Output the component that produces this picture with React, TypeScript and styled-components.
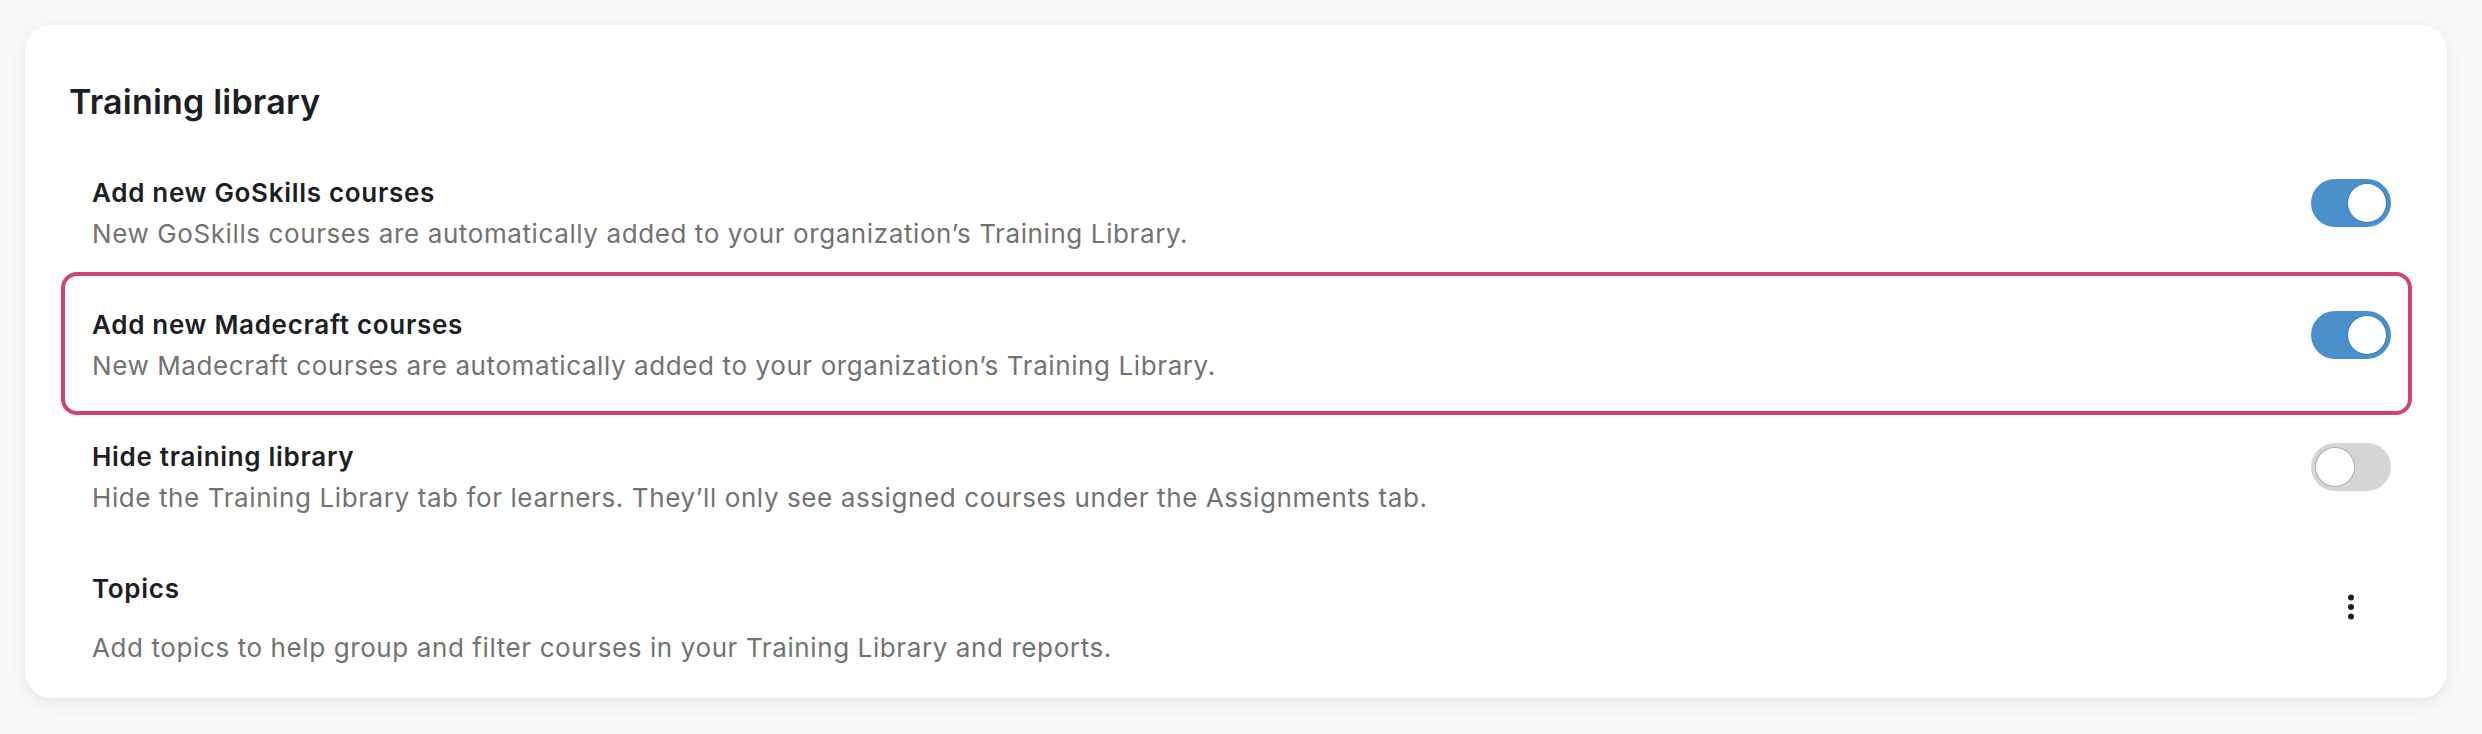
import styled, { createGlobalStyle } from 'styled-components';

const GlobalStyle = createGlobalStyle`
    html, body {
        margin: 0;
        padding: 0;
        background: #fafafa;
    }
    body {
        font-family: Inter, "Noto Sans", "Liberation Sans", sans-serif;
        -webkit-font-smoothing: antialiased;
    }
`;

const Page = styled.div`
    padding: 25px 35px 36px 25px;
`;

const Card = styled.section`
    background: #ffffff;
    border-radius: 26px;
    box-shadow: 0 5px 24px rgba(0, 0, 0, 0.08), 0 1px 4px rgba(0, 0, 0, 0.03);
    padding: 55px 56px 30px 44px;
`;

const CardTitle = styled.h2`
    margin: 0 0 48px;
    font-size: 34px;
    line-height: 44px;
    font-weight: 600;
    color: #1b1e22;
    letter-spacing: 0.2px;
`;

const SettingsList = styled.div`
    display: flex;
    flex-direction: column;
    gap: 50px;
    padding-left: 23px;
`;

const Row = styled.div<{ $highlighted?: boolean }>`
    position: relative;
    display: flex;
    align-items: flex-start;
    justify-content: space-between;
    gap: 40px;

    ${({ $highlighted }) =>
        $highlighted &&
        `
        &::after {
            content: '';
            position: absolute;
            inset: -32px -21px -29px -31px;
            border: 4px solid #cf4471;
            border-radius: 16px;
            pointer-events: none;
        }
    `}
`;

const RowText = styled.div<{ $spaced?: boolean }>`
    display: flex;
    flex-direction: column;
    gap: ${({ $spaced }) => ($spaced ? '18px' : '0')};
`;

const RowTitle = styled.div`
    font-size: 26px;
    line-height: 41px;
    font-weight: 600;
    letter-spacing: 0.7px;
    color: #1b1e22;
`;

const RowDescription = styled.div`
    font-size: 26px;
    line-height: 41px;
    font-weight: 400;
    letter-spacing: 0.6px;
    color: #717274;
`;

const Control = styled.div<{ $offset: number }>`
    flex: 0 0 80px;
    display: flex;
    justify-content: center;
    margin-top: ${({ $offset }) => $offset}px;
`;

const Switch = styled.button<{ $on: boolean }>`
    position: relative;
    width: 80px;
    height: 48px;
    padding: 0;
    border: none;
    border-radius: 24px;
    background: ${({ $on }) => ($on ? '#4a90ca' : '#d4d5d5')};
    cursor: pointer;

    &::before {
        content: '';
        position: absolute;
        top: 5px;
        left: ${({ $on }) => ($on ? '37px' : '5px')};
        width: 38px;
        height: 38px;
        border-radius: 50%;
        background: #ffffff;
        box-shadow: ${({ $on }) =>
            $on ? '0 0 0 1px rgba(40, 90, 140, 0.35)' : '0 0 0 1px rgba(0, 0, 0, 0.18)'};
    }
`;

const KebabButton = styled.button`
    display: flex;
    align-items: center;
    justify-content: center;
    width: 24px;
    height: 30px;
    padding: 0;
    border: none;
    background: transparent;
    cursor: pointer;
`;

function Kebab() {
    return (
        <KebabButton aria-label="More options">
            <svg width="8" height="28" viewBox="0 0 8 28" fill="#1f2023">
                <circle cx="4" cy="4.5" r="3" />
                <circle cx="4" cy="14" r="3" />
                <circle cx="4" cy="23.5" r="3" />
            </svg>
        </KebabButton>
    );
}

const toggles = [
    {
        title: 'Add new GoSkills courses',
        description: 'New GoSkills courses are automatically added to your organization’s Training Library.',
        on: true,
        highlighted: false,
    },
    {
        title: 'Add new Madecraft courses',
        description: 'New Madecraft courses are automatically added to your organization’s Training Library.',
        on: true,
        highlighted: true,
    },
    {
        title: 'Hide training library',
        description: 'Hide the Training Library tab for learners. They’ll only see assigned courses under the Assignments tab.',
        on: false,
        highlighted: false,
    },
];

export default function App() {
    return (
        <>
            <GlobalStyle />
            <Page>
                <Card>
                    <CardTitle>Training library</CardTitle>
                    <SettingsList>
                        {toggles.map((item) => (
                            <Row key={item.title} $highlighted={item.highlighted}>
                                <RowText>
                                    <RowTitle>{item.title}</RowTitle>
                                    <RowDescription>{item.description}</RowDescription>
                                </RowText>
                                <Control $offset={7}>
                                    <Switch $on={item.on} aria-pressed={item.on} />
                                </Control>
                            </Row>
                        ))}
                        <Row>
                            <RowText $spaced>
                                <RowTitle>Topics</RowTitle>
                                <RowDescription>
                                    Add topics to help group and filter courses in your Training Library and reports.
                                </RowDescription>
                            </RowText>
                            <Control $offset={24}>
                                <Kebab />
                            </Control>
                        </Row>
                    </SettingsList>
                </Card>
            </Page>
        </>
    );
}
